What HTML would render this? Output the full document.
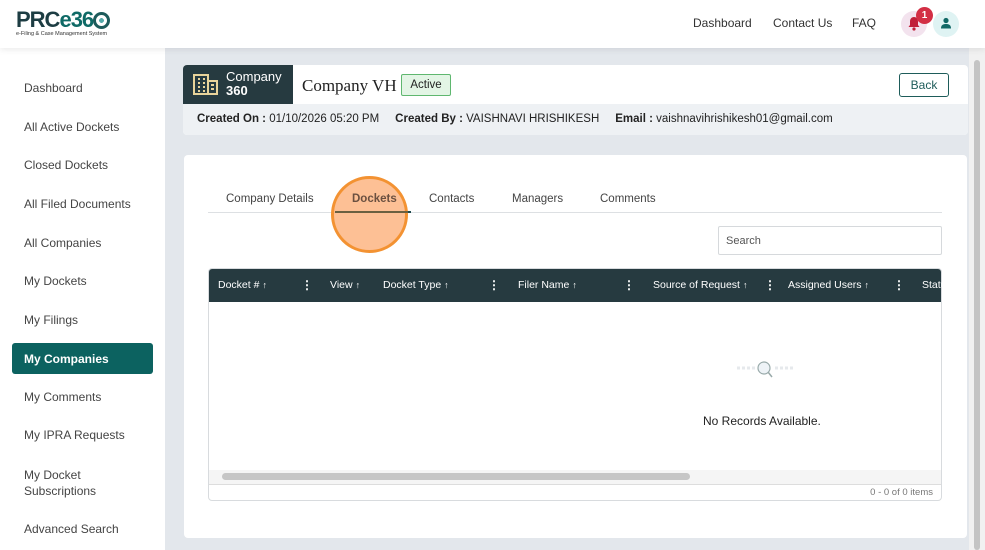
<!DOCTYPE html>
<html><head><style>
*{margin:0;padding:0;box-sizing:border-box}
body{width:985px;height:550px;overflow:hidden;background:#e3e7ec;font-family:"Liberation Sans",sans-serif;position:relative;color:#333}
.hdr{position:absolute;left:0;top:0;width:985px;height:48px;background:#fff;box-shadow:0 2px 6px rgba(0,0,0,.08);z-index:2}
.side{position:absolute;left:0;top:48px;width:165px;height:502px;background:#fff}
.side div{position:absolute;left:24px;font-size:12px;color:#444}
.abs{position:absolute}
.th{position:absolute;top:279px;font-size:10.5px;color:#fff}
.th span{font-size:9px;margin-left:3px}
.dots{position:absolute;top:278px;color:#fff;font-weight:bold;font-size:12px}
</style></head><body>
<div class="hdr">
 <div class="abs" style="left:16px;top:7px;font-size:22px;font-weight:bold;color:#1d3d43;letter-spacing:-1px">PRC<span style="color:#0f6a66">e36</span><span style="display:inline-block;width:17px;height:17px;border:3px solid #1d5b5b;border-radius:50%;vertical-align:-2px;background:radial-gradient(#5aa 30%,#fff 32%)"></span></div>
 <div class="abs" style="left:16px;top:31px;font-size:5.5px;color:#333">e-Filing &amp; Case Management System</div>
 <div class="abs" style="left:693px;top:16px;font-size:12px;color:#333">Dashboard</div>
 <div class="abs" style="left:773px;top:16px;font-size:12px;color:#333">Contact Us</div>
 <div class="abs" style="left:852px;top:16px;font-size:12px;color:#333">FAQ</div>
 <div class="abs" style="left:901px;top:11px;width:26px;height:26px;border-radius:50%;background:#f3e3ee"></div>
 <svg class="abs" style="left:907px;top:16px" width="14" height="15" viewBox="0 0 14 15"><path d="M7 1C4.5 1 3 3 3 5.5V9L1.5 11H12.5L11 9V5.5C11 3 9.5 1 7 1Z" fill="#c0203a"/><circle cx="7" cy="13" r="1.6" fill="#c0203a"/></svg>
 <div class="abs" style="left:916px;top:7px;width:17px;height:17px;border-radius:50%;background:#d32f45;color:#fff;font-size:10px;font-weight:bold;text-align:center;line-height:17px">1</div>
 <div class="abs" style="left:933px;top:11px;width:26px;height:26px;border-radius:50%;background:#dff3f3"></div>
 <svg class="abs" style="left:940px;top:17px" width="12" height="12" viewBox="0 0 12 12"><circle cx="6" cy="3.5" r="2.6" fill="#116866"/><path d="M1 11.5C1 8 3 7 6 7S11 8 11 11.5Z" fill="#116866"/></svg>
</div>
<div class="side">
 <div style="top:33px">Dashboard</div>
 <div style="top:72px">All Active Dockets</div>
 <div style="top:110px">Closed Dockets</div>
 <div style="top:149px">All Filed Documents</div>
 <div style="top:188px">All Companies</div>
 <div style="top:226px">My Dockets</div>
 <div style="top:265px">My Filings</div>
 <div style="left:12px;top:295px;width:141px;height:31px;background:#0c6260;border-radius:3px;color:#fff;font-weight:bold;padding:9px 12px">My Companies</div>
 <div style="top:342px">My Comments</div>
 <div style="top:380px">My IPRA Requests</div>
 <div style="top:419px;line-height:16px">My Docket<br>Subscriptions</div>
 <div style="top:474px">Advanced Search</div>
</div>
<div class="abs" style="left:969px;top:48px;width:16px;height:502px;background:#f1f1f1"></div>
<div class="abs" style="left:974px;top:60px;width:6px;height:490px;background:#c4c4c4;border-radius:3px"></div>
<!-- header card -->
<div class="abs" style="left:183px;top:65px;width:785px;height:70px;background:#fff;border-radius:4px;overflow:hidden">
 <div class="abs" style="left:0;top:0;width:110px;height:39px;background:#263a40"></div>
 <svg class="abs" style="left:10px;top:9px" width="25" height="21" viewBox="0 0 25 21"><rect x="1" y="1" width="14" height="19" fill="none" stroke="#e8d39a" stroke-width="2"/><rect x="15" y="7" width="9" height="13" fill="none" stroke="#e8d39a" stroke-width="2"/><path d="M5 5h2M10 5h2M5 9h2M10 9h2M5 13h2M10 13h2M5 17h2M10 17h2M18 11h3M18 15h3" stroke="#e8d39a" stroke-width="2"/></svg>
 <div class="abs" style="left:43px;top:5px;color:#fff;font-size:13px;line-height:14px">Company<br><b>360</b></div>
 <div class="abs" style="left:119px;top:11px;font-family:'Liberation Serif',serif;font-size:17px;color:#222">Company VH</div>
 <div class="abs" style="left:218px;top:9px;width:50px;height:22px;border:1px solid #5fb76f;background:#e3f5e5;border-radius:2px;font-size:11.5px;text-align:center;line-height:20px;color:#222">Active</div>
 <div class="abs" style="left:716px;top:8px;width:50px;height:24px;border:1px solid #1e5c5a;border-radius:3px;font-size:12px;color:#1e5c5a;text-align:center;line-height:22px">Back</div>
 <div class="abs" style="left:0;top:39px;width:785px;height:31px;background:#eef1f4;font-size:11.5px;color:#222;padding:9px 0 0 14px;white-space:nowrap"><b>Created On :</b> 01/10/2026 05:20 PM &nbsp;&nbsp;&nbsp;&nbsp;<b>Created By :</b> VAISHNAVI HRISHIKESH &nbsp;&nbsp;&nbsp;&nbsp;<b>Email :</b> vaishnavihrishikesh01@gmail.com</div>
</div>
<!-- main card -->
<div class="abs" style="left:184px;top:155px;width:783px;height:383px;background:#fff;border-radius:4px"></div>
<div class="abs" style="left:208px;top:212px;width:734px;height:1px;background:#dde0e3"></div>
<div class="abs" style="left:226px;top:193px;font-size:11.5px;color:#444">Company Details</div>
<div class="abs" style="left:429px;top:193px;font-size:11.5px;color:#444">Contacts</div>
<div class="abs" style="left:512px;top:193px;font-size:11.5px;color:#444">Managers</div>
<div class="abs" style="left:600px;top:193px;font-size:11.5px;color:#444">Comments</div>
<div class="abs" style="left:335px;top:211px;width:76px;height:2px;background:#1e4a4e"></div>
<div class="abs" style="left:331px;top:176px;width:77px;height:77px;border-radius:50%;background:rgba(252,176,122,.8);border:3px solid #f39232"></div>
<div class="abs" style="left:352px;top:193px;font-size:11.5px;font-weight:bold;color:#6b5040">Dockets</div>
<div class="abs" style="left:335px;top:211px;width:73px;height:2px;background:#6b6040"></div>
<div class="abs" style="left:718px;top:226px;width:224px;height:29px;border:1px solid #d6d9dc;border-radius:2px;font-size:11px;color:#555;padding:8px 7px">Search</div>
<!-- table -->
<div class="abs" style="left:208px;top:268px;width:734px;height:233px;border:1px solid #d8dbde;border-radius:4px;overflow:hidden">
 <div class="abs" style="left:0;top:0;width:734px;height:33px;background:#263a40"></div>
 <div class="abs" style="left:0;top:201px;width:734px;height:14px;background:#f5f5f5"></div>
 <div class="abs" style="left:13px;top:204px;width:468px;height:7px;background:#c6c6c6;border-radius:4px"></div>
 <div class="abs" style="left:0;top:215px;width:734px;height:1px;background:#ddd"></div>
 <div class="abs" style="right:8px;top:218px;font-size:9.5px;color:#777">0 - 0 of 0 items</div>
</div>
<div class="th" style="left:218px">Docket #<span>↑</span></div>
<div class="dots" style="left:301px">⋮</div>
<div class="th" style="left:330px">View<span>↑</span></div>
<div class="th" style="left:383px">Docket Type<span>↑</span></div>
<div class="dots" style="left:488px">⋮</div>
<div class="th" style="left:518px">Filer Name<span>↑</span></div>
<div class="dots" style="left:623px">⋮</div>
<div class="th" style="left:653px">Source of Request<span>↑</span></div>
<div class="dots" style="left:764px">⋮</div>
<div class="th" style="left:788px">Assigned Users<span>↑</span></div>
<div class="dots" style="left:893px">⋮</div>
<div class="th" style="left:922px;width:20px;overflow:hidden">Status</div>
<svg class="abs" style="left:735px;top:358px" width="60" height="24" viewBox="0 0 60 24"><path d="M2 10h20M40 10h18" stroke="#e6e9ec" stroke-width="3" stroke-dasharray="3 2"/><circle cx="29" cy="10" r="6" fill="#eef3f7" stroke="#9aa" stroke-width="1.2"/><path d="M33 14l4 5" stroke="#9aa" stroke-width="1.5"/></svg>
<div class="abs" style="left:703px;top:414px;font-size:12px;color:#222">No Records Available.</div>
</body></html>
